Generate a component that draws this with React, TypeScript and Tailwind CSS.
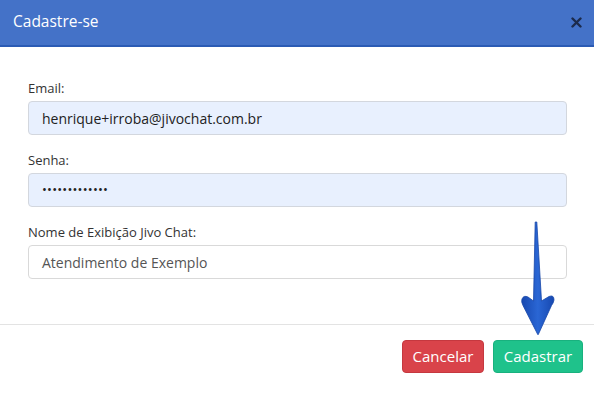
import React from 'react'

const font = { fontFamily: '"Open Sans", "Noto Sans", sans-serif' }

function Field({ label, value, filled, dots }: { label: string; value: string; filled?: boolean; dots?: boolean }) {
  return (
    <div className="flex flex-col">
      <label className="text-[13px] leading-[18px] text-[#333] mb-[4px]">{label}</label>
      <div
        className={
          'h-[34px] rounded-[4px] border flex items-center pl-[13px] ' +
          (dots ? 'text-[13px] tracking-[0.2px] ' : 'text-[14px] ') +
          (filled ? 'bg-[#e8f0fe] border-[#d3d7de] text-[#222]' : 'bg-white border-[#d9d9d9] text-[#555]')
        }
      >
        {value}
      </div>
    </div>
  )
}

export default function App() {
  return (
    <div className="relative w-[594px] h-[399px] bg-white overflow-hidden" style={font}>
      {/* header */}
      <div className="h-[47px] bg-[#4472c8] border-b-2 border-[#2b5bb4] flex items-center justify-between pl-[13px] pr-[11px]">
        <span className="text-white text-[15.5px] pb-[1px]">Cadastre-se</span>
        <svg width="13" height="11" viewBox="0 0 13 11" className="mb-[1px]">
          <path d="M2.5 1.5 L10.5 9.5 M10.5 1.5 L2.5 9.5" stroke="#1c2b4c" strokeWidth="2.4" strokeLinecap="round" />
        </svg>
      </div>

      {/* body */}
      <div className="pt-[32px] pl-[28px] pr-[27px] flex flex-col gap-[16px]">
        <Field label="Email:" value="henrique+irroba@jivochat.com.br" filled />
        <Field label="Senha:" value="•••••••••••••" filled dots />
        <Field label="Nome de Exibição Jivo Chat:" value="Atendimento de Exemplo" />
      </div>

      {/* footer */}
      <div className="mt-[45px] border-t border-[#e3e3e3] pt-[15px] pr-[11px] flex justify-end gap-[9px]">
        <button className="w-[82px] h-[33px] rounded-[4px] bg-[#d9434a] border border-[#c5383f] text-white text-[15px]">
          Cancelar
        </button>
        <button className="w-[90px] h-[33px] rounded-[4px] bg-[#1fc28b] border border-[#19b17e] text-white text-[15px]">
          Cadastrar
        </button>
      </div>

      {/* arrow annotation */}
      <svg className="absolute left-[518px] top-[218px]" width="40" height="122" viewBox="0 0 40 122">
        <defs>
          <linearGradient id="ar" x1="0" x2="1" y1="0" y2="0">
            <stop offset="0" stopColor="#1748b0" />
            <stop offset="0.5" stopColor="#2a66d4" />
            <stop offset="1" stopColor="#1748b0" />
          </linearGradient>
        </defs>
        <path
          d="M17.2 4 L18.8 4 L23.5 83 L31 78.5 Q36 76.5 36 82 Q35.5 85 33.5 87.5 L20.5 116 Q20 117.5 19.5 116 L5 87.5 Q3 84 4 81 Q5.5 77 10 79 L15.5 83 Z"
          fill="url(#ar)"
          stroke="#1646a8"
          strokeWidth="0.8"
          strokeLinejoin="round"
        />
      </svg>
    </div>
  )
}
